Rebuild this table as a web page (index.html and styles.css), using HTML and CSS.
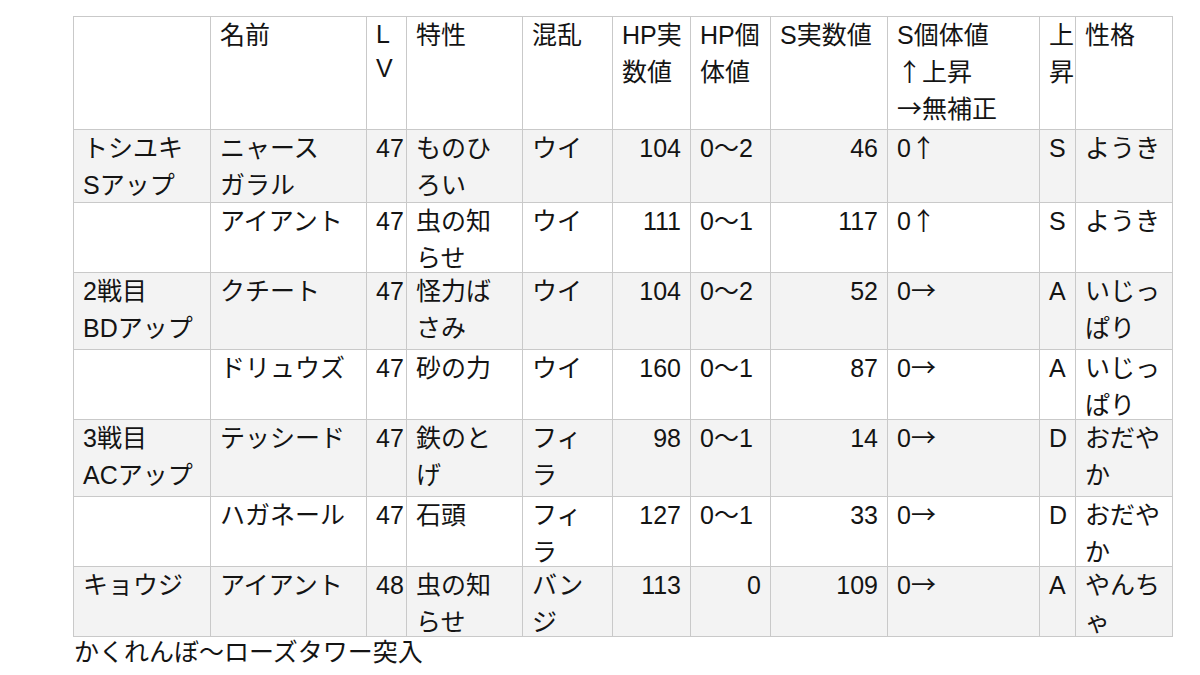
FILE: index.html
```html
<!DOCTYPE html>
<html lang="ja">
<head>
<meta charset="utf-8">
<title>表</title>
<link rel="stylesheet" href="styles.css">
</head>
<body>
<div class="sheet">
  <div class="row head">
    <div class="cell"></div>
    <div class="cell">名前</div>
    <div class="cell lv latin">L<br>V</div>
    <div class="cell">特性</div>
    <div class="cell">混乱</div>
    <div class="cell">HP実<br>数値</div>
    <div class="cell">HP個<br>体値</div>
    <div class="cell">S実数値</div>
    <div class="cell">S個体値<br><span class="arw">↑</span>上昇<br><span class="arw">→</span>無補正</div>
    <div class="cell">上<br>昇</div>
    <div class="cell">性格</div>
  </div>
  <div class="row alt mid">
    <div class="cell">トシユキ<br>Sアップ</div>
    <div class="cell">ニャース<br>ガラル</div>
    <div class="cell lv">47</div>
    <div class="cell">ものひ<br>ろい</div>
    <div class="cell">ウイ</div>
    <div class="cell num">104</div>
    <div class="cell">0〜2</div>
    <div class="cell num">46</div>
    <div class="cell">0<span class="arw">↑</span></div>
    <div class="cell">S</div>
    <div class="cell">ようき</div>
  </div>
  <div class="row short">
    <div class="cell"></div>
    <div class="cell">アイアント</div>
    <div class="cell lv">47</div>
    <div class="cell">虫の知<br>らせ</div>
    <div class="cell">ウイ</div>
    <div class="cell num">111</div>
    <div class="cell">0〜1</div>
    <div class="cell num">117</div>
    <div class="cell">0<span class="arw">↑</span></div>
    <div class="cell">S</div>
    <div class="cell">ようき</div>
  </div>
  <div class="row alt tall">
    <div class="cell">2戦目<br>BDアップ</div>
    <div class="cell">クチート</div>
    <div class="cell lv">47</div>
    <div class="cell">怪力ば<br>さみ</div>
    <div class="cell">ウイ</div>
    <div class="cell num">104</div>
    <div class="cell">0〜2</div>
    <div class="cell num">52</div>
    <div class="cell">0<span class="arw">→</span></div>
    <div class="cell">A</div>
    <div class="cell">いじっ<br>ぱり</div>
  </div>
  <div class="row short">
    <div class="cell"></div>
    <div class="cell">ドリュウズ</div>
    <div class="cell lv">47</div>
    <div class="cell">砂の力</div>
    <div class="cell">ウイ</div>
    <div class="cell num">160</div>
    <div class="cell">0〜1</div>
    <div class="cell num">87</div>
    <div class="cell">0<span class="arw">→</span></div>
    <div class="cell">A</div>
    <div class="cell">いじっ<br>ぱり</div>
  </div>
  <div class="row alt tall">
    <div class="cell">3戦目<br>ACアップ</div>
    <div class="cell">テッシード</div>
    <div class="cell lv">47</div>
    <div class="cell">鉄のと<br>げ</div>
    <div class="cell">フィ<br>ラ</div>
    <div class="cell num">98</div>
    <div class="cell">0〜1</div>
    <div class="cell num">14</div>
    <div class="cell">0<span class="arw">→</span></div>
    <div class="cell">D</div>
    <div class="cell">おだや<br>か</div>
  </div>
  <div class="row short">
    <div class="cell"></div>
    <div class="cell">ハガネール</div>
    <div class="cell lv">47</div>
    <div class="cell">石頭</div>
    <div class="cell">フィ<br>ラ</div>
    <div class="cell num">127</div>
    <div class="cell">0〜1</div>
    <div class="cell num">33</div>
    <div class="cell">0<span class="arw">→</span></div>
    <div class="cell">D</div>
    <div class="cell">おだや<br>か</div>
  </div>
  <div class="row alt short">
    <div class="cell">キョウジ</div>
    <div class="cell">アイアント</div>
    <div class="cell lv">48</div>
    <div class="cell">虫の知<br>らせ</div>
    <div class="cell">バン<br>ジ</div>
    <div class="cell num">113</div>
    <div class="cell num">0</div>
    <div class="cell num">109</div>
    <div class="cell">0<span class="arw">→</span></div>
    <div class="cell">A</div>
    <div class="cell">やんち<br>ゃ</div>
  </div>
</div>
<p class="caption">かくれんぼ〜ローズタワー突入</p>
</body>
</html>
```
FILE: styles.css
```css
html, body {
  background: #ffffff;
}

body {
  margin: 0;
  padding: 16px 0 0 73px;
  font-family: "Liberation Sans", "Noto Sans CJK JP", sans-serif;
  font-size: 25px;
  color: #141414;
}

.sheet {
  display: block;
  width: max-content;
  border-top: 1px solid #c9c9c9;
  border-left: 1px solid #c9c9c9;
}

.row {
  display: grid;
  grid-template-columns: 137px 156px 40px 116px 90px 78px 80px 117px 152px 36px 97px;
  grid-template-rows: minmax(0, 1fr);
}

.row.alt {
  background: #f3f3f3;
}

.row.head {
  height: 113px;
}

.row.mid {
  height: 73px;
}

.row.short {
  height: 70px;
}

.row.tall {
  height: 77px;
}

.cell {
  box-sizing: border-box;
  min-width: 0;
  min-height: 0;
  padding: 0 9px;
  border-right: 1px solid #c9c9c9;
  border-bottom: 1px solid #c9c9c9;
  line-height: 37px;
  white-space: nowrap;
  overflow: visible;
}

.cell.num {
  text-align: right;
}

.cell.lv {
  padding: 0 0 0 9px;
}

.cell.latin {
  line-height: 34px;
}

.arw {
  font-family: "Noto Sans CJK JP", sans-serif;
  line-height: 0;
}

.caption {
  margin: 0;
  padding-left: 1px;
  line-height: 30px;
}
```
